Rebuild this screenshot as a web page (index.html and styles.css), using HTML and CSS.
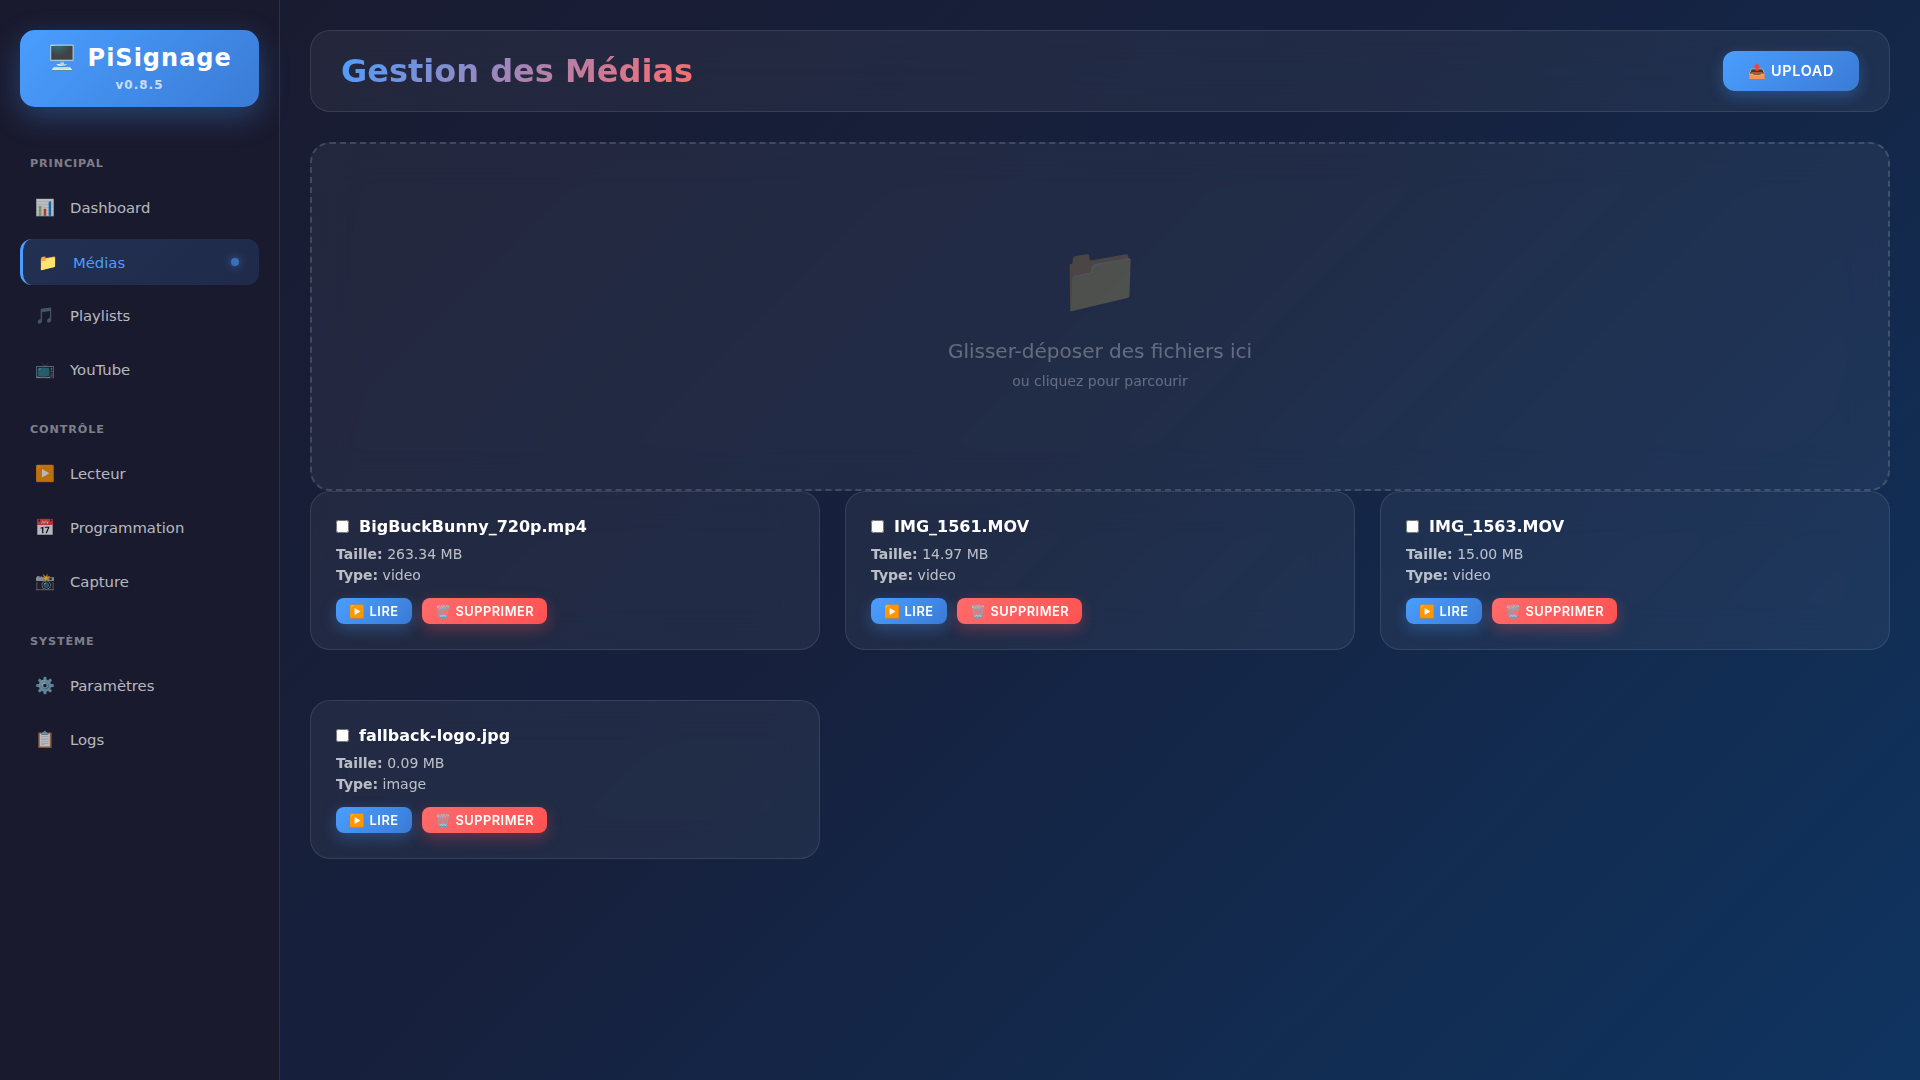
FILE: index.html
```html
<!DOCTYPE html>
<html lang="fr">
<head>
  <meta charset="UTF-8" />
  <title>PiSignage</title>
  <link rel="stylesheet" href="styles.css">
</head>
<body>

<aside class="sidebar">
  <div class="logo">
    <div class="logo-title">🖥️ PiSignage</div>
    <div class="logo-version">v0.8.5</div>
  </div>

  <nav class="nav-section">
    <div class="nav-title">Principal</div>
    <a class="nav-item"><span class="nav-icon">📊</span>Dashboard</a>
    <a class="nav-item active"><span class="nav-icon">📁</span>Médias</a>
    <a class="nav-item"><span class="nav-icon">🎵</span>Playlists</a>
    <a class="nav-item"><span class="nav-icon">📺</span>YouTube</a>
  </nav>

  <nav class="nav-section">
    <div class="nav-title">Contrôle</div>
    <a class="nav-item"><span class="nav-icon">▶️</span>Lecteur</a>
    <a class="nav-item"><span class="nav-icon">📅</span>Programmation</a>
    <a class="nav-item"><span class="nav-icon">📸</span>Capture</a>
  </nav>

  <nav class="nav-section">
    <div class="nav-title">Système</div>
    <a class="nav-item"><span class="nav-icon">⚙️</span>Paramètres</a>
    <a class="nav-item"><span class="nav-icon">📋</span>Logs</a>
  </nav>
</aside>

<main class="main">
  <header class="page-header">
    <h1 class="page-title">Gestion des Médias</h1>
    <button class="btn btn-primary btn-upload">📤 Upload</button>
  </header>

  <section class="dropzone">
    <div class="drop-icon">📁</div>
    <div class="drop-text">Glisser-déposer des fichiers ici</div>
    <div class="drop-sub">ou cliquez pour parcourir</div>
  </section>

  <section class="media-grid">
    <article class="card">
      <div class="card-title"><input type="checkbox" class="check">BigBuckBunny_720p.mp4</div>
      <p class="card-line"><strong>Taille:</strong> 263.34 MB</p>
      <p class="card-line"><strong>Type:</strong> video</p>
      <div class="card-actions">
        <button class="btn btn-primary">▶️ Lire</button>
        <button class="btn btn-danger">🗑️ Supprimer</button>
      </div>
    </article>
    <article class="card">
      <div class="card-title"><input type="checkbox" class="check">IMG_1561.MOV</div>
      <p class="card-line"><strong>Taille:</strong> 14.97 MB</p>
      <p class="card-line"><strong>Type:</strong> video</p>
      <div class="card-actions">
        <button class="btn btn-primary">▶️ Lire</button>
        <button class="btn btn-danger">🗑️ Supprimer</button>
      </div>
    </article>
    <article class="card">
      <div class="card-title"><input type="checkbox" class="check">IMG_1563.MOV</div>
      <p class="card-line"><strong>Taille:</strong> 15.00 MB</p>
      <p class="card-line"><strong>Type:</strong> video</p>
      <div class="card-actions">
        <button class="btn btn-primary">▶️ Lire</button>
        <button class="btn btn-danger">🗑️ Supprimer</button>
      </div>
    </article>
    <article class="card">
      <div class="card-title"><input type="checkbox" class="check">fallback-logo.jpg</div>
      <p class="card-line"><strong>Taille:</strong> 0.09 MB</p>
      <p class="card-line"><strong>Type:</strong> image</p>
      <div class="card-actions">
        <button class="btn btn-primary">▶️ Lire</button>
        <button class="btn btn-danger">🗑️ Supprimer</button>
      </div>
    </article>
  </section>
</main>

</body>
</html>
```

FILE: styles.css
```css
* {
  box-sizing: border-box;
}
html, body {
  height: 100%;
}
body {
  margin: 0;
  font-family: 'DejaVu Sans', sans-serif;
  background: linear-gradient(135deg, #1a1a2e 0%, #16213e 50%, #0f3460 100%);
  color: #fff;
  display: flex;
  min-height: 100vh;
  overflow: hidden;
}
.sidebar {
  width: 280px;
  flex-shrink: 0;
  background: #1a1a2e;
  border-right: 1px solid rgba(255, 255, 255, .1);
  backdrop-filter: blur(20px);
  padding: 30px 20px;
}
.logo {
  height: 77px;
  margin-bottom: 50px;
  padding-top: 13px;
  text-align: center;
  border-radius: 15px;
  background: linear-gradient(135deg, #4a9eff, #3a7bd5);
  box-shadow: 0 10px 30px rgba(74, 158, 255, .3);
}
.logo-title {
  font-size: 24px;
  line-height: 30px;
  font-weight: 700;
  letter-spacing: 1px;
}
.logo-version {
  margin-top: 5px;
  font-size: 12px;
  line-height: 14px;
  font-weight: 700;
  letter-spacing: 1px;
  opacity: .7;
}
.nav-section {
  margin-bottom: 31px;
}
.nav-title {
  padding-left: 10px;
  margin-bottom: 13px;
  font-size: 11.2px;
  line-height: 14px;
  font-weight: 700;
  letter-spacing: .9px;
  text-transform: uppercase;
  color: rgba(255, 255, 255, .45);
}
.nav-item {
  display: flex;
  align-items: center;
  height: 46px;
  margin-bottom: 8px;
  padding-left: 15px;
  border-radius: 12px;
  font-size: 14.8px;
  color: rgba(255, 255, 255, .7);
  position: relative;
}
.nav-icon {
  width: 20px;
  margin-right: 15px;
  font-size: 16px;
  text-align: center;
}
.nav-item.active {
  margin-top: 9px;
  margin-bottom: 7px;
  color: #4a9eff;
  background: linear-gradient(135deg, rgba(74, 158, 255, .17), rgba(58, 123, 213, .17));
  border-left: 3px solid #4a9eff;
}
.nav-item.active::after {
  content: "";
  position: absolute;
  right: 20px;
  top: 19px;
  width: 8px;
  height: 8px;
  border-radius: 50%;
  background: #4a9eff;
  opacity: .6;
  box-shadow: 0 0 10px #4a9eff;
}
.main {
  flex: 1;
  min-width: 0;
  padding: 30px;
}
.page-header {
  height: 82px;
  margin-bottom: 30px;
  padding: 0 30px;
  display: flex;
  align-items: center;
  justify-content: space-between;
  background: rgba(255, 255, 255, .05);
  border: 1px solid rgba(255, 255, 255, .1);
  border-radius: 20px;
  backdrop-filter: blur(20px);
}
.page-title {
  margin: 0;
  font-size: 32px;
  font-weight: 700;
  background: linear-gradient(135deg, #4a9eff, #ff6b6b);
  -webkit-background-clip: text;
  background-clip: text;
  color: transparent;
}
.btn {
  border: none;
  border-radius: 8px;
  height: 26px;
  padding: 0 13.4px;
  font-family: 'Inter', sans-serif;
  font-size: 12.8px;
  font-weight: 600;
  letter-spacing: .5px;
  text-transform: uppercase;
  color: #fff;
}
.btn-primary {
  background: linear-gradient(135deg, #4a9eff, #3a7bd5);
  box-shadow: 0 5px 15px rgba(74, 158, 255, .3);
}
.btn-danger {
  background: linear-gradient(135deg, #ff6b6b, #ff5252);
  box-shadow: 0 5px 15px rgba(255, 82, 82, .3);
}
.btn-upload {
  height: 40px;
  width: 136px;
  padding: 0;
  border-radius: 12px;
  font-size: 14.4px;
  letter-spacing: .7px;
}
.dropzone {
  height: 349px;
  padding-top: 98px;
  text-align: center;
  background: rgba(255, 255, 255, .05);
  border: 2px dashed rgba(255, 255, 255, .15);
  border-radius: 20px;
  backdrop-filter: blur(20px);
}
.drop-icon {
  font-size: 66px;
  line-height: 75px;
  opacity: .2;
  margin-bottom: 22px;
}
.drop-text {
  font-size: 20px;
  line-height: 24px;
  color: rgba(255, 255, 255, .3);
}
.drop-sub {
  margin-top: 8px;
  font-size: 14px;
  line-height: 20px;
  color: rgba(255, 255, 255, .3);
}
.media-grid {
  display: grid;
  grid-template-columns: repeat(3, 1fr);
  gap: 50px 25px;
}
.card {
  height: 159px;
  padding: 25px;
  background: rgba(255, 255, 255, .05);
  border: 1px solid rgba(255, 255, 255, .1);
  border-radius: 20px;
  backdrop-filter: blur(20px);
}
.card-title {
  display: flex;
  align-items: center;
  height: 18px;
  margin-bottom: 9px;
  font-size: 16px;
  font-weight: 700;
}
.check {
  width: 13px;
  height: 13px;
  margin: 0 10px 0 0;
}
.card-line {
  margin: 0;
  font-size: 14px;
  line-height: 21px;
  color: rgba(255, 255, 255, .7);
}
.card-actions {
  display: flex;
  gap: 10px;
  margin-top: 12px;
}
```
